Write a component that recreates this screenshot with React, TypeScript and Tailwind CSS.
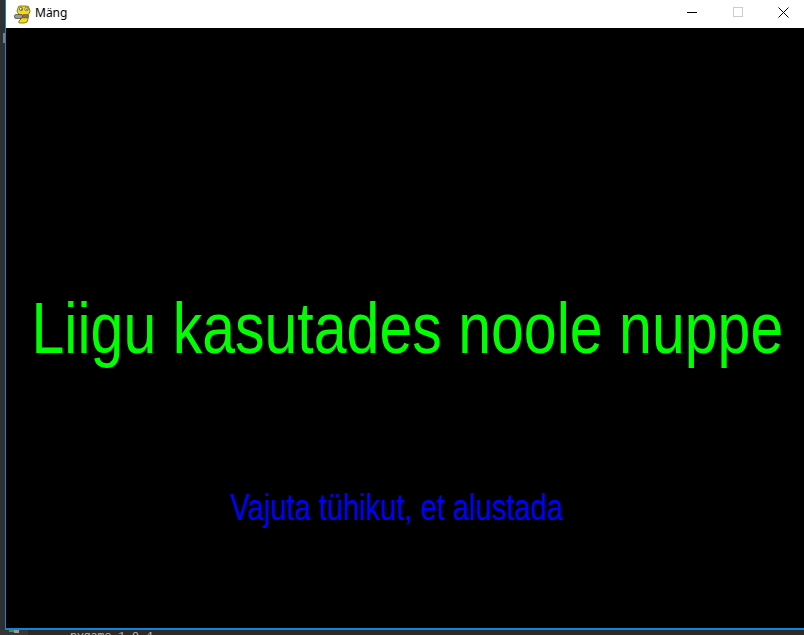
function PygameIcon() {
  return (
    <svg width="18" height="19" viewBox="0 0 18 19" className="shrink-0">
      <path d="M4 3 Q4 1 6 1 L12 1 Q15 1 15 3 L16 6 Q16 9 14 9 L14 14 Q14 18 10 18 L6 18 Q4 18 5 16 L7 14 L5 13 L5 9 Q3 8 3 6 Z" fill="#f7dc11" stroke="#6a5f18" strokeWidth="0.8" />
      <circle cx="7" cy="4" r="1.7" fill="#fff" stroke="#333" strokeWidth="0.6" />
      <circle cx="12.5" cy="4" r="1.7" fill="#fff" stroke="#333" strokeWidth="0.6" />
      <circle cx="7.3" cy="4.2" r="0.6" fill="#222" />
      <circle cx="12.8" cy="4.2" r="0.6" fill="#222" />
      <rect x="0.5" y="9.5" width="8" height="4" rx="1.5" fill="#a09c94" stroke="#3e3e3e" strokeWidth="0.7" />
      <rect x="8.5" y="9.5" width="6" height="3.5" rx="1" fill="#8e6f55" stroke="#55463a" strokeWidth="0.5" />
    </svg>
  );
}

export default function App() {
  return (
    <div className="flex flex-col w-[804px] h-[635px] overflow-hidden bg-[#2b2b2b]">
      <div className="flex h-[630px] shrink-0">
        {/* editor behind the window */}
        <div className="w-[5px] shrink-0 bg-[#2f2f2f] pt-[33px] flex flex-col items-end">
          <div className="w-[2px] h-[10px] bg-[#7d7d7d]" />
        </div>
        <div className="flex flex-col flex-1 min-w-0 border-l border-b-2 border-[#1583d8]">
          {/* title bar */}
          <div className="flex items-center shrink-0 h-[28px] bg-white pl-[8px]">
            <PygameIcon />
            <span className="ml-[3px] -mt-[2px] text-[12px] text-black font-['Noto_Sans',sans-serif]">Mäng</span>
            <div className="ml-auto -mr-[2px] pb-[4px] flex items-center">
              <div className="w-[46px] flex justify-center">
                <div className="w-[10px] h-px bg-black" />
              </div>
              <div className="w-[45px] flex justify-center">
                <div className="w-[10px] h-[10px] border border-[#cccccc]" />
              </div>
              <div className="w-[46px] flex justify-center">
                <svg width="11" height="11" viewBox="0 0 11 11">
                  <path d="M0.5 0.5 L10.5 10.5 M10.5 0.5 L0.5 10.5" stroke="#000" strokeWidth="1" />
                </svg>
              </div>
            </div>
          </div>
          {/* game surface */}
          <div className="flex flex-col items-center flex-1 overflow-hidden bg-black font-['Liberation_Sans',sans-serif]">
            <div className="mt-[257px] ml-[4px] scale-x-[0.82] text-[72px] leading-[86px] text-[#00ff00] whitespace-nowrap">
              Liigu kasutades noole nuppe
            </div>
            <div className="mt-[116px] mr-[16px] scale-x-[0.808] text-[36px] leading-[42px] text-[#0000ff] whitespace-nowrap">
              Vajuta tühikut, et alustada
            </div>
          </div>
        </div>
      </div>
      {/* bottom of the editor */}
      <div className="flex flex-1 min-h-0">
        <div className="flex w-[28px] shrink-0 bg-[#343638] pl-[9px]">
          <div className="w-[5px] h-[2px] bg-[#3f8f4f]" />
          <div className="w-[5px] h-[3px] bg-[#9a9a9a]" />
        </div>
        <div className="pl-[42px] text-[11.5px] leading-[11px] text-[#b9b9b9] font-['Liberation_Mono',monospace] whitespace-nowrap">
          pygame 1.9.4
        </div>
      </div>
    </div>
  );
}
